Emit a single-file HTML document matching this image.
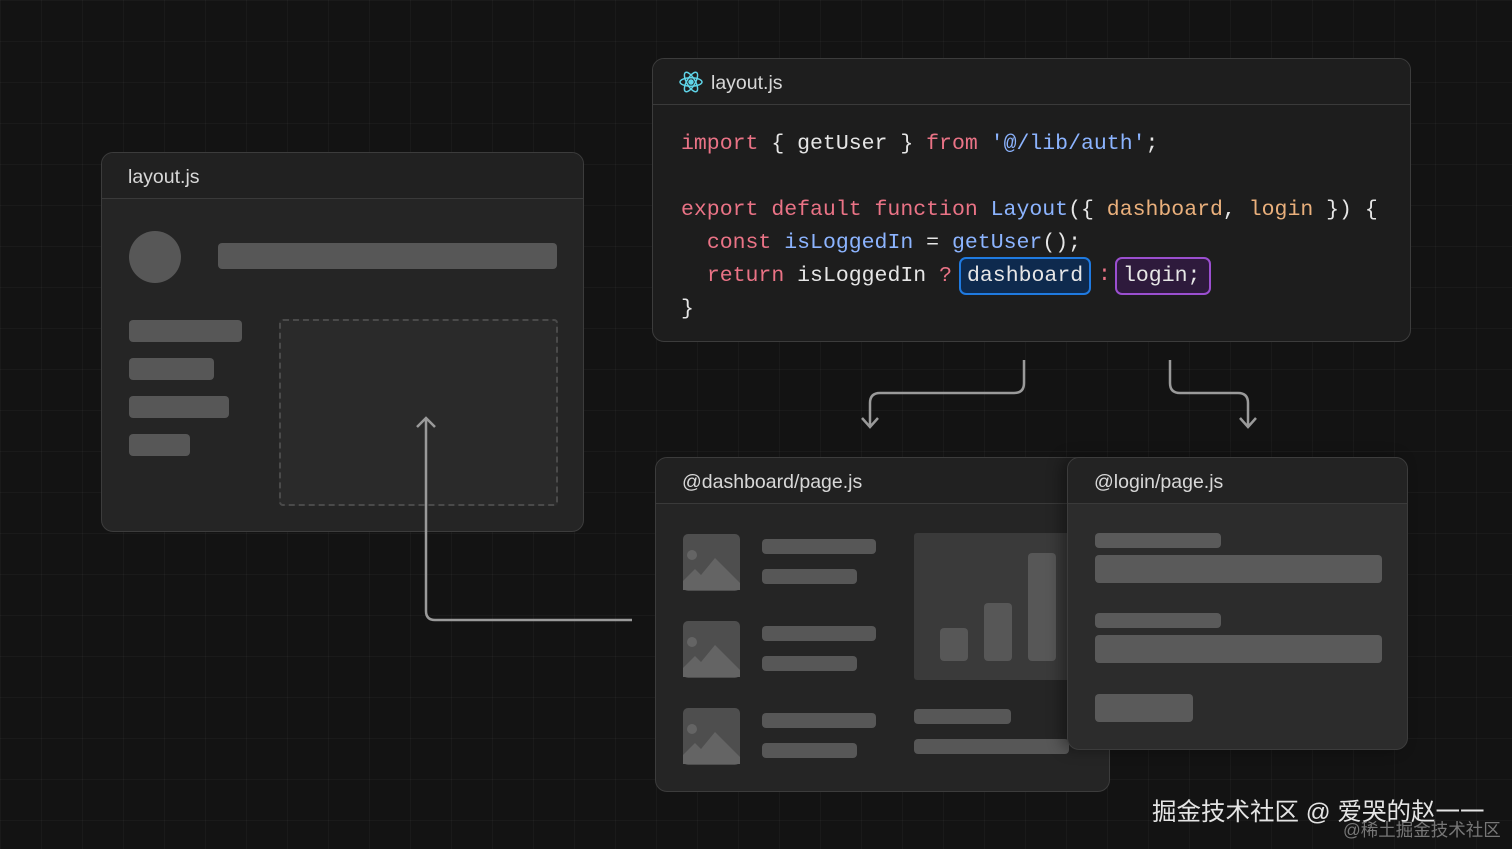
<!DOCTYPE html>
<html><head><meta charset="utf-8"><style>
*{margin:0;padding:0;box-sizing:border-box}
body{width:1512px;height:849px;overflow:hidden;background:#131313;position:relative;font-family:"Liberation Sans",sans-serif;
background-image:linear-gradient(rgba(255,255,255,0.03) 1px,transparent 1px),linear-gradient(90deg,rgba(255,255,255,0.03) 1px,transparent 1px);background-size:41px 41px}
.p{position:absolute;border:1.5px solid #3c3c3c;border-radius:12px;background:#252525;overflow:hidden}
.h{height:46px;background:#212121;border-bottom:1.5px solid #3a3a3a;color:#d8d8d8;font-size:19.5px;padding-left:26px;line-height:48px}
.b{position:absolute;background:#575757;border-radius:4px}
.code{position:absolute;left:28px;top:69px;font-family:"Liberation Mono",monospace;font-size:21.5px;line-height:33px;color:#e6e6e6;white-space:pre}
.k{color:#ea7386}.v{color:#8cb4ff}.o{color:#eab07c}
.img{position:absolute;width:57px;height:57px;background:#4e4e4e;border-radius:5px;overflow:hidden}
</style></head><body>

<div class="p" style="left:101px;top:152px;width:483px;height:380px">
 <div class="h">layout.js</div>
 <div class="b" style="left:27px;top:78px;width:52px;height:52px;border-radius:50%"></div>
 <div class="b" style="left:116px;top:90px;width:339px;height:26px"></div>
 <div class="b" style="left:27px;top:167px;width:113px;height:22px"></div>
 <div class="b" style="left:27px;top:205px;width:85px;height:22px"></div>
 <div class="b" style="left:27px;top:243px;width:100px;height:22px"></div>
 <div class="b" style="left:27px;top:281px;width:61px;height:22px"></div>
 <div style="position:absolute;left:177px;top:166px;width:279px;height:187px;border:2px dashed #4a4a4a;border-radius:4px;background:#2a2a2a"></div>
</div>

<div class="p" style="left:652px;top:58px;width:759px;height:284px;background:#1d1d1d">
 <div class="h" style="background:#1e1e1e;padding-left:58px">layout.js</div>
 <svg style="position:absolute;left:26px;top:11px" width="24" height="24" viewBox="-12 -12 24 24" fill="none" stroke="#5fd4e8" stroke-width="1.5"><ellipse rx="11" ry="4.2"/><ellipse rx="11" ry="4.2" transform="rotate(60)"/><ellipse rx="11" ry="4.2" transform="rotate(120)"/><circle r="2" fill="#5fd4e8"/></svg>
 <div class="code"><span class="k">import</span> { getUser } <span class="k">from</span> <span class="v">'@/lib/auth'</span>;

<span class="k">export default function</span> <span class="v">Layout</span>({ <span class="o">dashboard</span>, <span class="o">login</span> }) {
  <span class="k">const</span> <span class="v">isLoggedIn</span> = <span class="v">getUser</span>();
  <span class="k">return</span> isLoggedIn <span class="k">?</span>
}</div>
 <div style="position:absolute;left:445px;top:200px;font-family:'Liberation Mono',monospace;font-size:21.5px;line-height:33px;color:#ea7386">:</div>
 <div style="position:absolute;left:306px;top:198px;width:132px;height:38px;border:2.5px solid #1f7ae0;border-radius:7px;background:#0e2a4e;color:#e6e6e6;font-family:'Liberation Mono',monospace;font-size:21.5px;line-height:34px;padding-left:6px">dashboard</div>
 <div style="position:absolute;left:462px;top:198px;width:96px;height:38px;border:2.5px solid #9b4fd0;border-radius:7px;background:#2e1a3c;color:#e6e6e6;font-family:'Liberation Mono',monospace;font-size:21.5px;line-height:34px;padding-left:6px">login;</div>
</div>

<svg style="position:absolute;left:0;top:0" width="1512" height="849" fill="none" stroke="#9a9a9a" stroke-width="2.5">
 <path d="M1024 360V383Q1024 393 1014 393H880Q870 393 870 403V427M862 418L870 427L878 418"/>
 <path d="M1170 360V383Q1170 393 1180 393H1238Q1248 393 1248 403V427M1240 418L1248 427L1256 418"/>
 <path d="M632 620H435Q426 620 426 611V418M417 427L426 418L435 427"/>
</svg>

<div class="p" style="left:655px;top:457px;width:455px;height:335px">
 <div class="h">@dashboard/page.js</div>
 <div class="img" style="left:27px;top:76px"></div>
 <div class="img" style="left:27px;top:163px"></div>
 <div class="img" style="left:27px;top:250px"></div>
 <div class="b" style="left:106px;top:81px;width:114px;height:15px"></div>
 <div class="b" style="left:106px;top:111px;width:95px;height:15px"></div>
 <div class="b" style="left:106px;top:168px;width:114px;height:15px"></div>
 <div class="b" style="left:106px;top:198px;width:95px;height:15px"></div>
 <div class="b" style="left:106px;top:255px;width:114px;height:15px"></div>
 <div class="b" style="left:106px;top:285px;width:95px;height:15px"></div>
 <div style="position:absolute;left:258px;top:75px;width:160px;height:147px;background:#3a3a3a;border-radius:3px"></div>
 <div class="b" style="left:284px;top:170px;width:28px;height:33px"></div>
 <div class="b" style="left:328px;top:145px;width:28px;height:58px"></div>
 <div class="b" style="left:372px;top:95px;width:28px;height:108px"></div>
 <div class="b" style="left:258px;top:251px;width:97px;height:15px"></div>
 <div class="b" style="left:258px;top:281px;width:155px;height:15px"></div>
</div>
<svg style="position:absolute;left:683px;top:533px" width="57" height="232" fill="#646464">
 <g><circle cx="9" cy="22" r="5"/><path d="M0 48L12 36L18 42L32 25L57 50V57H0Z"/></g>
 <g transform="translate(0,87)"><circle cx="9" cy="22" r="5"/><path d="M0 48L12 36L18 42L32 25L57 50V57H0Z"/></g>
 <g transform="translate(0,174)"><circle cx="9" cy="22" r="5"/><path d="M0 48L12 36L18 42L32 25L57 50V57H0Z"/></g>
</svg>

<div class="p" style="left:1067px;top:457px;width:341px;height:293px;background:#2c2c2c;box-shadow:-6px 0 14px rgba(0,0,0,.35)">
 <div class="h" style="background:#232323">@login/page.js</div>
 <div class="b" style="left:27px;top:75px;width:126px;height:15px;background:#5a5a5a"></div>
 <div class="b" style="left:27px;top:97px;width:287px;height:28px;background:#5a5a5a"></div>
 <div class="b" style="left:27px;top:155px;width:126px;height:15px;background:#5a5a5a"></div>
 <div class="b" style="left:27px;top:177px;width:287px;height:28px;background:#5a5a5a"></div>
 <div class="b" style="left:27px;top:236px;width:98px;height:28px;background:#5a5a5a"></div>
</div>

<div style="position:absolute;left:1152px;top:793px;color:#e4e4e4;font-size:24.5px;font-family:'Liberation Sans','Noto Sans CJK SC',sans-serif;white-space:nowrap">掘金技术社区 @ 爱哭的赵一一</div>
<div style="position:absolute;left:1343px;top:817px;color:#777;font-size:17.5px;font-family:'Liberation Sans','Noto Sans CJK SC',sans-serif;white-space:nowrap">@稀土掘金技术社区</div>
</body></html>
